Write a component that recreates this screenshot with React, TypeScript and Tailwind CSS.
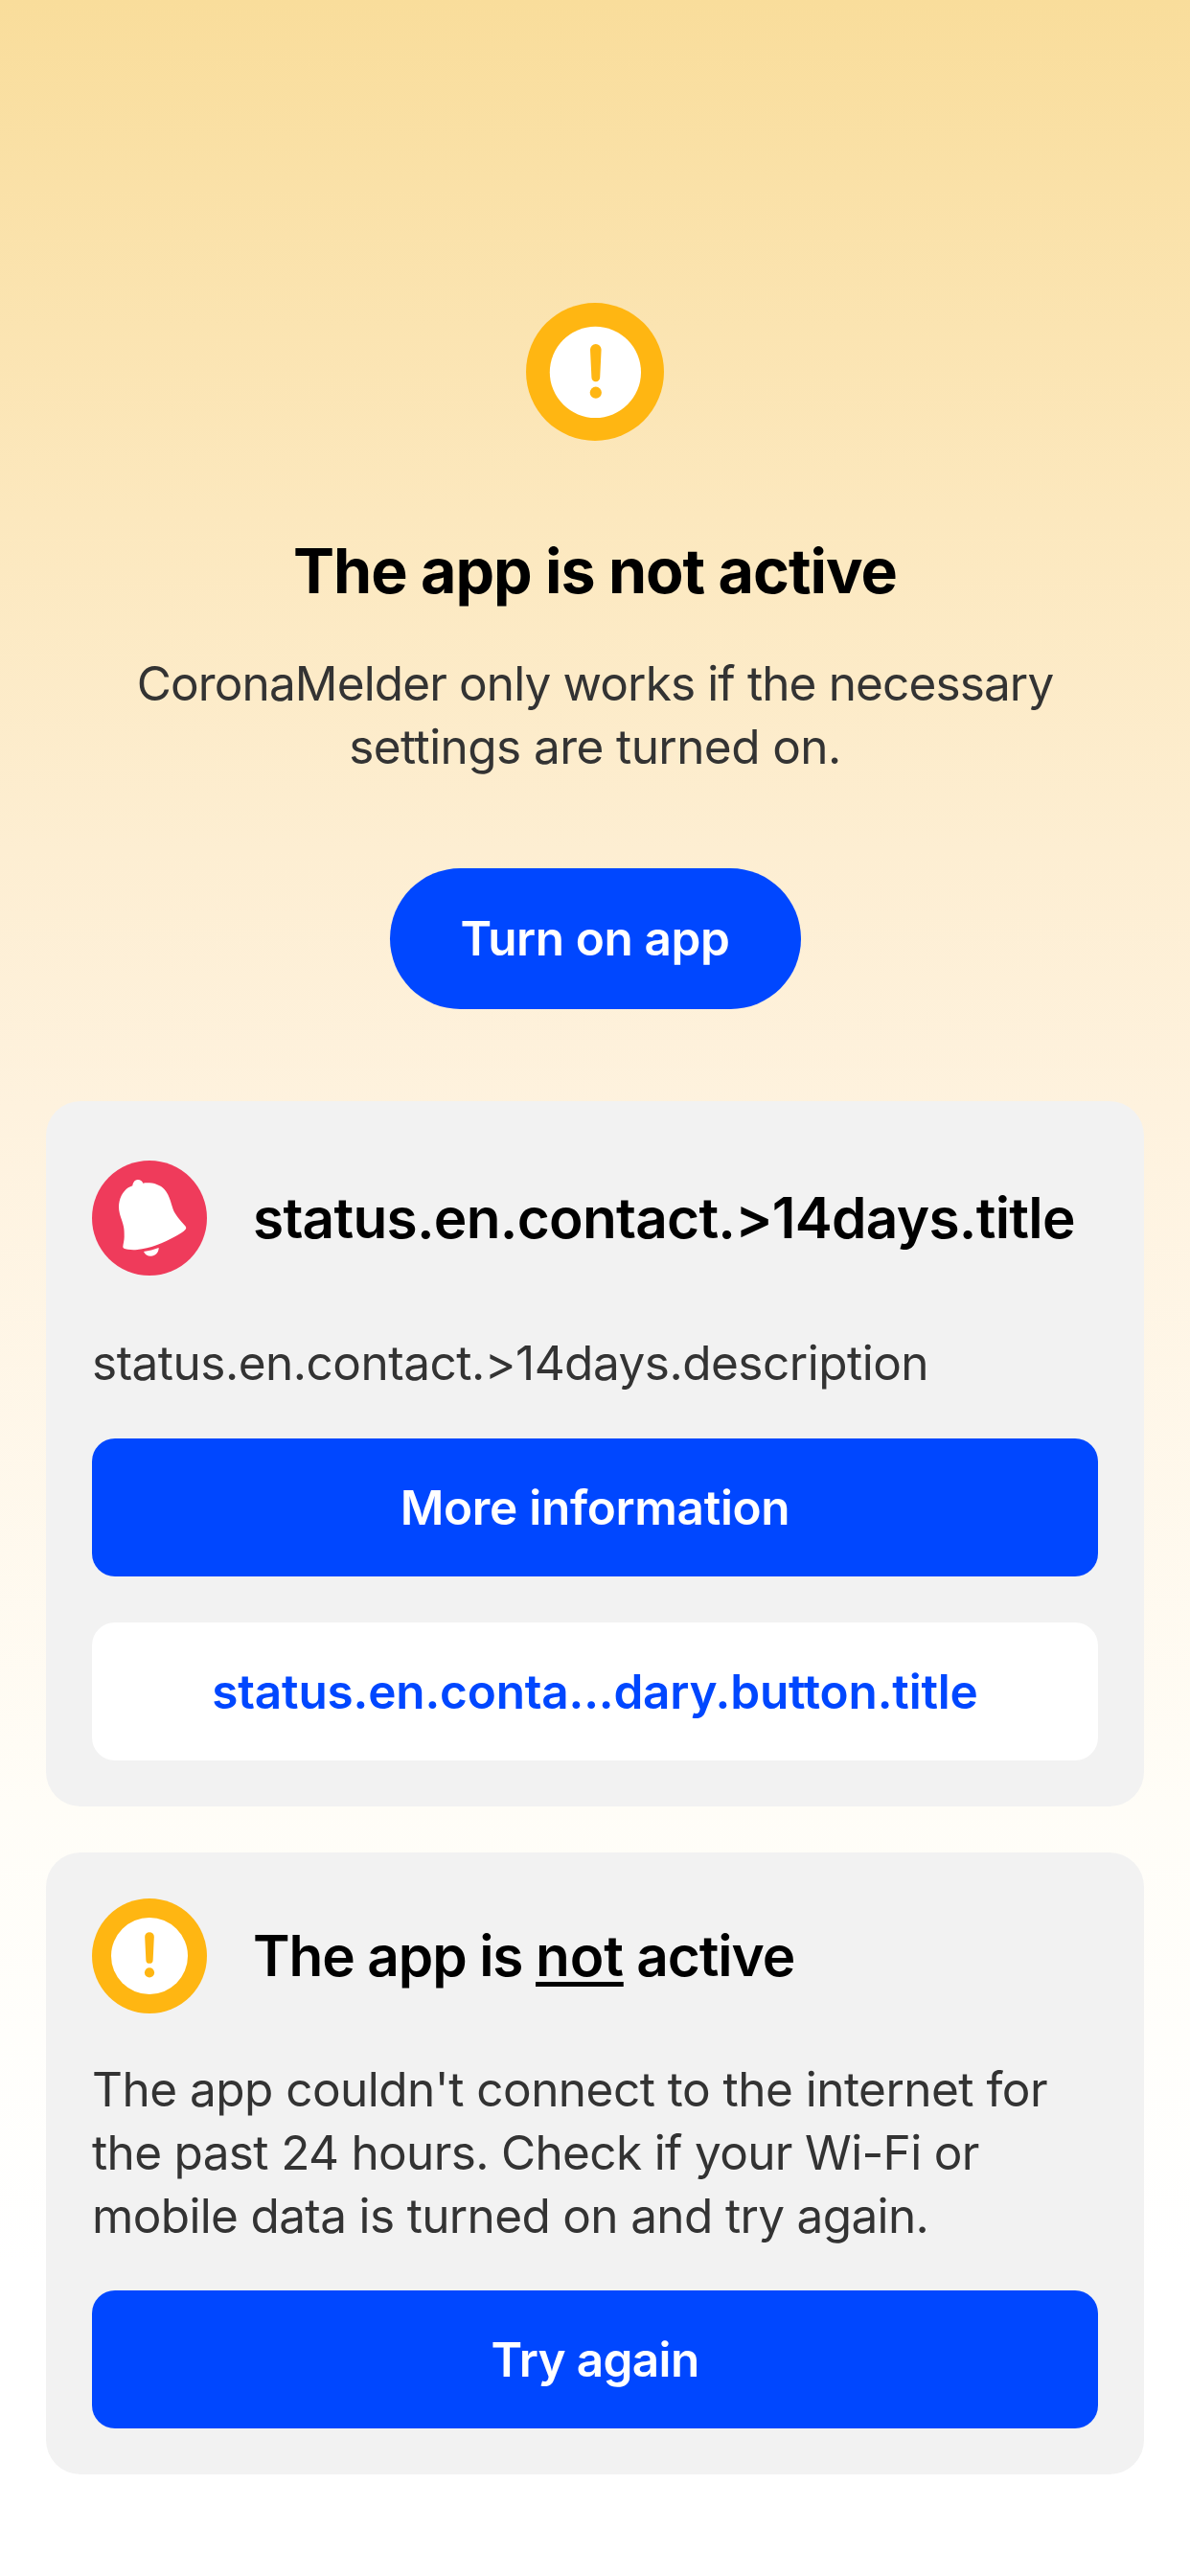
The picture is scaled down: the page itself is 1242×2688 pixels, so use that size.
import React from "react";

function Warning({ className, shift = 0 }: { className: string; shift?: number }) {
  return (
    <svg className={className} viewBox="0 0 144 144">
      <circle cx="72" cy="72" r="72" fill="#FFB612" />
      <circle cx={72 + shift / 2} cy={72 + shift / 2} r={48 - shift / 2} fill="#fff" />
      <g fill="#FFB612" transform={`translate(${shift} ${shift})`}>
        <path d="M66.2 48a5.8 5.8 0 0 1 11.6 0l-1.4 29a4.4 4.4 0 0 1-8.8 0z" />
        <circle cx="72" cy="92.9" r="6.1" />
      </g>
    </svg>
  );
}

function Bell() {
  return (
    <svg className="size-[120px] shrink-0" viewBox="0 0 120 120">
      <circle cx="60" cy="60" r="60" fill="#EF3B5B" />
      <path d="M42.3 26.3C43 22 45.2 20 48 20c2.600 0 4.300 1.200 5.300 3.700 2-.5 4.200-.6 6.700-.4 7.500.6 13.500 3.400 17.300 9 3 4.400 4.400 9 5.700 13.400 1.100 3.600 2 6.500 3.700 9.300 3 5.100 7 9.400 10.600 13.300 1.100 1.200 1.200 2.400.4 3.400C95.500 74.500 91.500 76.800 87.300 79c-6.300 3.300-13 6.700-20 9.300-6.700 2.500-13.500 4.100-20 4.700-3.500.3-6.700.2-10 -.3-3.600-.6-5-1.200-5-2.700.3-3.500 1.500-7 1.400-11 0-3.500 0-6.500-.7-10-1-5-3-9.300-4-13.300-1.300-4.800-1.300-9.200-.3-13.400C29.700 38 31.400 34.500 34 31.700c2.400-2.600 5.200-4.400 8.300-5.400z" fill="#fff" />
      <path d="M54 94.900c5.500-.7 10.600-2 15.700-3.900 0 5-3.700 8.700-8.200 8.700-3.700 0-6.300-1.700-7.500-4.800z" fill="#fff" />
    </svg>
  );
}

export default function App() {
  return (
    <main className="flex h-[2688px] w-[1242px] flex-col items-center bg-[linear-gradient(#F9DD9B,#FCE8BE_20%,#FDEED2_33%,#FEF2DE_43%,#FFFDF7_70%,#fff_88%)] px-12 pt-[316px] font-['Inter',sans-serif] text-black">
      <Warning className="size-[144px]" shift={0.8} />
      <h1 className="mt-[95px] h-[82px] whitespace-nowrap text-[64.5px] leading-[82px] font-bold tracking-[-1px]">The app is not active</h1>
      <p className="mt-[43px] text-center text-[49.5px] leading-[66px] text-[#333]">
        <span className="block tracking-[-0.87px]">CoronaMelder only works if the necessary</span>
        <span className="block tracking-[-0.57px]">settings are turned on.</span>
      </p>
      <button className="mt-[94px] h-[147px] w-[429px] rounded-full bg-[#0047FF] text-[49.5px] font-semibold tracking-[-0.4px] text-white">Turn on app</button>
      <section className="mt-[96px] h-[736px] w-full rounded-[36px] bg-[#F2F2F2] px-12 pt-[62px]">
        <div className="flex items-center gap-12"><Bell /><h2 className="whitespace-nowrap text-[58.5px] font-semibold tracking-[-0.73px]">status.en.contact.&gt;14days.title</h2></div>
        <p className="mt-[58px] text-[49.5px] leading-[66px] tracking-[-0.5px] text-[#333]">status.en.contact.&gt;14days.description</p>
        <button className="mt-[46px] block h-[144px] w-full rounded-[24px] bg-[#0047FF] text-[49.5px] font-semibold tracking-[-0.3px] text-white">More information</button>
        <button className="mt-12 block h-[144px] w-full rounded-[24px] bg-white text-[49.5px] font-semibold tracking-[-0.17px] text-[#0047FF]">status.en.conta...dary.button.title</button>
      </section>
      <section className="mt-12 h-[649px] w-full rounded-[36px] bg-[#F2F2F2] px-12 pt-12">
        <div className="flex items-center gap-12">
          <Warning className="size-[120px] shrink-0" />
          <h2 className="whitespace-nowrap text-[58.5px] font-semibold tracking-[-1.12px]">The app is <span className="tracking-[-0.1px] underline decoration-[5px] underline-offset-[6px] [text-decoration-skip-ink:none]">not</span> active</h2>
        </div>
        <p className="mt-[46px] text-[49.5px] leading-[66px] whitespace-nowrap text-[#333]">
          <span className="block tracking-[-0.52px]">The app couldn't connect to the internet for</span>
          <span className="block tracking-[-0.66px]">the past 24 hours. Check if your Wi-Fi or</span>
          <span className="block tracking-[-0.65px]">mobile data is turned on and try again.</span>
        </p>
        <button className="mt-[45px] block h-[144px] w-full rounded-[24px] bg-[#0047FF] text-[49.5px] font-semibold tracking-[-0.65px] text-white">Try again</button>
      </section>
    </main>
  );
}
